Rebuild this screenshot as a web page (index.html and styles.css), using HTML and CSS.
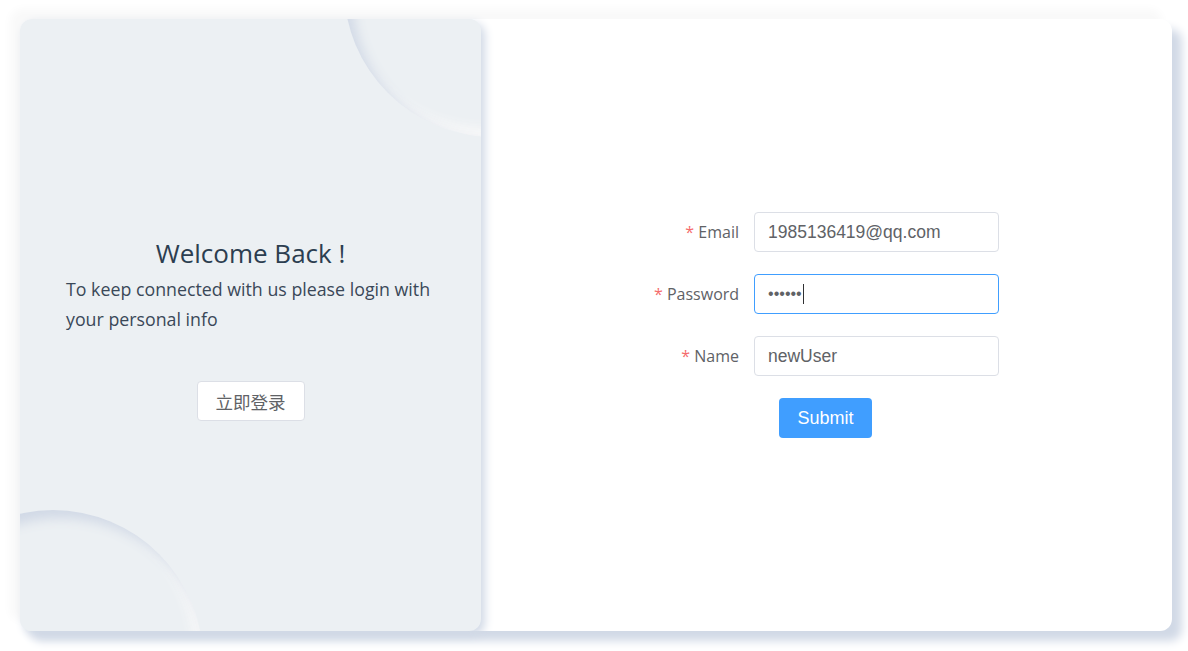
FILE: index.html
```html
<!DOCTYPE html>
<html lang="en">
<head>
<meta charset="utf-8">
<title>Register</title>
<link rel="stylesheet" href="styles.css">
</head>
<body>
<div class="card">
  <aside class="side">
    <span class="circle circle-top"></span>
    <span class="circle circle-bottom"></span>
    <div class="side-content">
      <h2 class="title">Welcome Back !</h2>
      <p class="desc">To keep connected with us please login with your personal info</p>
      <button class="btn-plain" type="button">立即登录</button>
    </div>
  </aside>
  <main class="main">
    <form class="form">
      <div class="form-item">
        <label class="label"><span class="req">*</span> Email</label>
        <div class="input"><span class="value">1985136419@qq.com</span></div>
      </div>
      <div class="form-item">
        <label class="label"><span class="req">*</span> Password</label>
        <div class="input focused"><span class="dots">••••••</span><span class="caret"></span></div>
      </div>
      <div class="form-item">
        <label class="label"><span class="req">*</span> Name</label>
        <div class="input"><span class="value">newUser</span></div>
      </div>
      <div class="actions">
        <button class="btn-primary" type="button">Submit</button>
      </div>
    </form>
  </main>
</div>
</body>
</html>
```

FILE: styles.css
```css
* { box-sizing: border-box; }
html, body { margin: 0; height: 100%; background: #ffffff; }
body {
  padding: 19px 16px 20px 20px;
  font-family: "Open Sans", "Noto Sans CJK SC", sans-serif;
  color: #2c3e50;
}
.card {
  display: flex;
  width: 1152px;
  height: 612px;
  background: #ffffff;
  border-radius: 12px;
  box-shadow: 10px 10px 10px #d1d9e6, -10px -10px 10px #f9f9f9;
}
.side {
  position: relative;
  z-index: 1;
  flex: 0 0 461px;
  height: 100%;
  padding-top: 213px;
  background: #ecf0f3;
  border-radius: 12px;
  overflow: hidden;
  box-shadow: 4px 4px 10px #d1d9e6;
  display: flex;
  align-items: flex-start;
  justify-content: center;
}
.circle {
  position: absolute;
  width: 300px;
  height: 300px;
  border-radius: 50%;
  background: #ecf0f3;
  box-shadow: inset 8px 8px 12px #d1d9e6, inset -8px -8px 12px #f9f9f9;
}
.circle-top { left: 324px; top: -182px; }
.circle-bottom { left: -117px; top: 491px; }
.side-content {
  position: relative;
  width: 369px;
  display: flex;
  flex-direction: column;
  align-items: center;
}
.title {
  margin: 0;
  font-weight: 400;
  font-size: 26px;
  line-height: 42px;
  color: #2c3e50;
}
.desc {
  margin: 0 0 47px;
  align-self: stretch;
  font-size: 17.8px;
  line-height: 30px;
  color: #3a4858;
}
.btn-plain {
  height: 40px;
  padding: 0 18px;
  border: 1px solid #dcdfe6;
  border-radius: 4px;
  background: #ffffff;
  color: #606266;
  font-family: "Noto Sans CJK SC", sans-serif;
  font-size: 17.5px;
}
.main {
  flex: 1;
  display: flex;
  align-items: center;
  justify-content: center;
}
.form {
  width: 345px;
}
.form-item {
  display: flex;
  align-items: center;
  margin-bottom: 22px;
}
.label {
  flex: 0 0 100px;
  padding-right: 15px;
  text-align: right;
  white-space: nowrap;
  font-size: 16px;
  color: #606266;
}
.req { color: #f56c6c; }
.input {
  flex: 1;
  height: 40px;
  display: flex;
  align-items: center;
  padding: 0 13px;
  border: 1px solid #dcdfe6;
  border-radius: 4px;
  background: #ffffff;
  font-family: "Liberation Sans", Arial, sans-serif;
  font-size: 17.5px;
  color: #606266;
}
.input.focused { border-color: #409eff; }
.dots {
  font-size: 16px;
  letter-spacing: 0;
  color: #606266;
}
.caret {
  width: 1px;
  height: 20px;
  margin-left: 1px;
  background: #303133;
}
.actions {
  display: flex;
  justify-content: center;
  margin-top: 4px;
  padding-right: 2px;
}
.btn-primary {
  width: 93px;
  height: 40px;
  border: 0;
  border-radius: 4px;
  background: #409eff;
  color: #ffffff;
  font-family: "Liberation Sans", Arial, sans-serif;
  font-size: 18px;
}
```
